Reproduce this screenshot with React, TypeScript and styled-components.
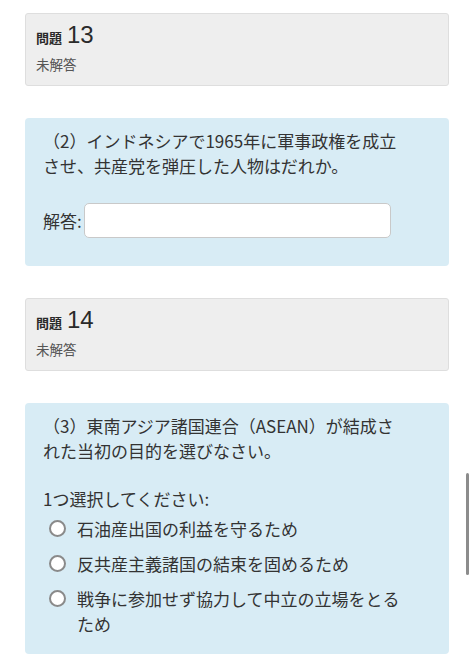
import styled, { createGlobalStyle } from "styled-components";

const GlobalStyle = createGlobalStyle`
  html, body {
    margin: 0;
    padding: 0;
    background: #fff;
  }
  body {
    font-family: "Noto Sans CJK JP", "Noto Sans", sans-serif;
    color: #333;
  }
`;

const Page = styled.div`
  padding: 13px 25px 14px 25px;
  display: flex;
  flex-direction: column;
  gap: 32px;
`;

const InfoCard = styled.div`
  background: #eeeeee;
  border: 1px solid #dedede;
  border-radius: 3px;
  padding: 6px 10px 10px 10px;
  height: 73px;
  box-sizing: border-box;
`;

const QTitle = styled.div`
  display: flex;
  align-items: baseline;
  gap: 5px;
  color: #2a2a2a;
`;

const QLabel = styled.span`
  font-size: 13px;
  font-weight: 700;
`;

const QNumber = styled.span`
  font-family: "Liberation Sans", Arial, sans-serif;
  font-size: 24px;
  font-weight: 400;
  line-height: 30px;
`;

const QState = styled.div`
  margin-top: 4px;
  font-size: 13.5px;
  color: #555;
`;

const Formulation = styled.div<{ $bottom: number }>`
  background: #d8ecf5;
  border-radius: 4px;
  padding: 10px 40px ${(p) => p.$bottom}px 18px;
  color: #333;
  font-size: 17px;
  line-height: 25px;
`;

const QText = styled.p`
  margin: 0;
`;

const AnswerRow = styled.div`
  margin-top: 25px;
  display: flex;
  align-items: center;
  gap: 2px;
  padding-bottom: 10px;
`;

const AnswerInput = styled.input`
  width: 307px;
  height: 35px;
  box-sizing: border-box;
  border: 1px solid #c9c9c9;
  border-radius: 5px;
  background: #fff;
  font-size: 16px;
  padding: 4px 8px;
  outline: none;
`;

const Prompt = styled.div`
  margin-top: 23px;
`;

const Options = styled.div`
  display: flex;
  flex-direction: column;
  gap: 10px;
  margin-top: 5px;
`;

const Option = styled.label`
  display: flex;
  align-items: flex-start;
  gap: 11px;
  padding-left: 6px;
`;

const Radio = styled.span`
  flex: none;
  width: 17px;
  height: 17px;
  border: 2px solid #8a8a8a;
  border-radius: 50%;
  background: #fff;
  box-sizing: border-box;
  margin-top: 4px;
`;

const Scrollbar = styled.div`
  position: fixed;
  right: 5px;
  top: 473px;
  width: 3px;
  height: 102px;
  border-radius: 2px;
  background: #8c8c8c;
`;

const options = [
  "石油産出国の利益を守るため",
  "反共産主義諸国の結束を固めるため",
  "戦争に参加せず協力して中立の立場をとるため",
];

function InfoBox({ num }: { num: number }) {
  return (
    <InfoCard>
      <QTitle>
        <QLabel>問題</QLabel>
        <QNumber>{num}</QNumber>
      </QTitle>
      <QState>未解答</QState>
    </InfoCard>
  );
}

export default function App() {
  return (
    <>
      <GlobalStyle />
      <Page>
        <InfoBox num={13} />
        <Formulation $bottom={18}>
          <QText>（2）インドネシアで1965年に軍事政権を成立させ、共産党を弾圧した人物はだれか。</QText>
          <AnswerRow>
            <span>解答:</span>
            <AnswerInput type="text" />
          </AnswerRow>
        </Formulation>
        <InfoBox num={14} />
        <Formulation $bottom={18}>
          <QText>（3）東南アジア諸国連合（ASEAN）が結成された当初の目的を選びなさい。</QText>
          <Prompt>1つ選択してください:</Prompt>
          <Options>
            {options.map((o) => (
              <Option key={o}>
                <Radio />
                <span>{o}</span>
              </Option>
            ))}
          </Options>
        </Formulation>
      </Page>
      <Scrollbar />
    </>
  );
}
